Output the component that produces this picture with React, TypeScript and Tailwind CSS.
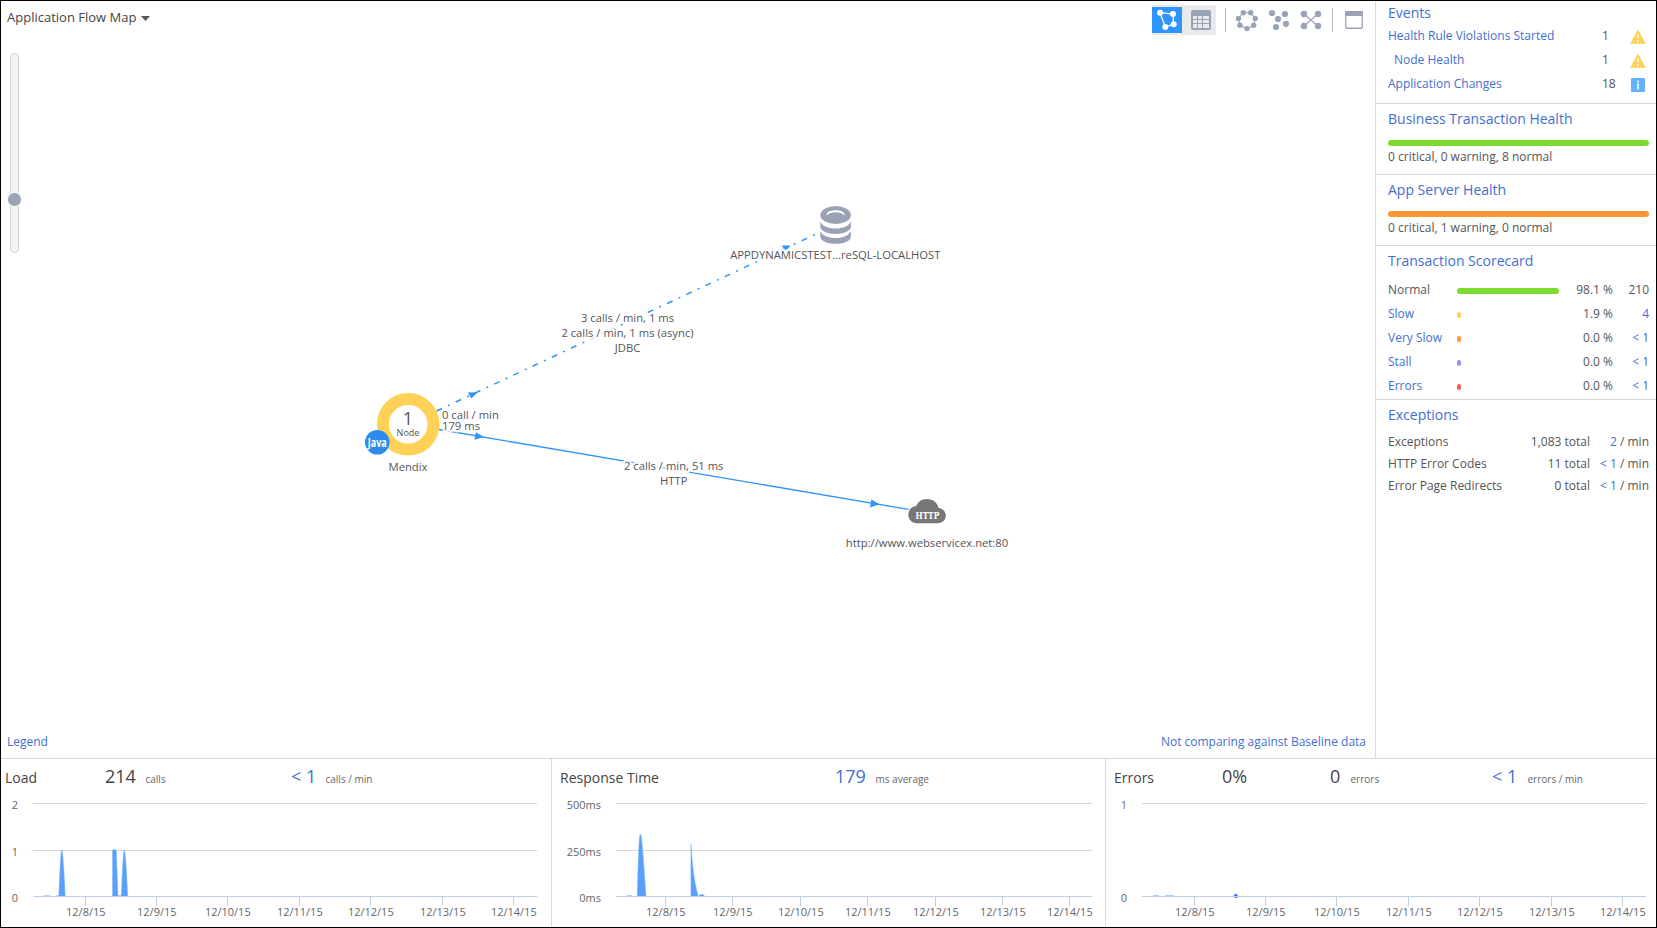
import React from 'react';

const OS = '"Open Sans", "Noto Sans", sans-serif';
const LINE = '#2f94fb';
const GREY = '#9aa3b5';

type Tick = { x: number; label: string };
const DAYS = ['12/8/15', '12/9/15', '12/10/15', '12/11/15', '12/12/15', '12/13/15', '12/14/15'];
const ticks = (xs: number[]): Tick[] => xs.map((x, i) => ({ x, label: DAYS[i] }));

function Dots({ pts, r }: { pts: number[][]; r: number }) {
  return (
    <>
      {pts.map(([x, y], i) => (
        <circle key={i} cx={x} cy={y} r={r} />
      ))}
    </>
  );
}

function Toolbar() {
  return (
    <div className="mt-1 flex h-[30px] items-center">
      <div className="flex h-[30px] items-center bg-[#e9eaec]">
        <button className="flex h-[26px] w-[30px] items-center justify-center bg-[#2f94fb]">
          <svg width="30" height="26" viewBox="0 0 30 26" fill="#fff" stroke="none">
            <path d="M8 5.7 21 7l.7 10.3-8.4 2.7z" fill="none" stroke="#fff" strokeWidth="1.3" />
            <Dots pts={[[8, 5.7], [21, 7], [21.7, 17.3], [13.3, 20]]} r={3} />
          </svg>
        </button>
        <button className="flex h-[30px] w-[34px] items-center justify-center">
          <svg width="34" height="30" viewBox="0 0 34 30" fill={GREY}>
            <path
              fillRule="evenodd"
              d="M11 5h16a2 2 0 0 1 2 2v16a2 2 0 0 1-2 2H11a2 2 0 0 1-2-2V7a2 2 0 0 1 2-2zM11 11v3h4v-3zM16 11v3h4v-3zM21 11v3h6v-3zM11 15v3h4v-3zM16 15v3h4v-3zM21 15v3h6v-3zM11 19v4h4v-4zM16 19v4h4v-4zM21 19v4h6v-4z"
            />
          </svg>
        </button>
      </div>
      <div className="ml-[9px] h-6 w-px bg-[#b5b8be]" />
      <svg className="ml-2.5" width="22" height="24" viewBox="1236 8 22 24" fill={GREY}>
        <path d="M1243.3 12.7h7.4l4.6 5.6-1.6 7-6.7 3.4-7-3.4-1.7-7z" fill="none" stroke={GREY} strokeWidth="1.1" />
        <Dots pts={[[1243.3, 12.7], [1250.7, 12.7], [1255.2, 18.4], [1253.7, 25.3], [1247, 28.6], [1240, 25.3], [1238.4, 18.4]]} r={2.7} />
      </svg>
      <svg className="ml-2.5" width="22" height="24" viewBox="1268 8 22 24" fill={GREY}>
        <Dots pts={[[1272, 13], [1285, 14], [1278, 19], [1286, 23.8], [1276, 27]]} r={3.1} />
      </svg>
      <svg className="ml-2.5" width="22" height="24" viewBox="1300 8 22 24" fill={GREY}>
        <path d="M1303.8 13.8 1318 26.2M1318 13.8 1303.8 26.2" stroke={GREY} strokeWidth="1.2" />
        <Dots pts={[[1303.9, 14], [1318, 14], [1303.9, 26], [1318, 26]]} r={3.2} />
      </svg>
      <div className="ml-[10px] h-6 w-px bg-[#b5b8be]" />
      <svg className="ml-3" width="18" height="18" viewBox="0 0 18 18">
        <rect x="0.75" y="0.75" width="16.5" height="16.5" rx="0.7" fill="#fff" stroke={GREY} strokeWidth="1.3" />
        <rect x="0" y="0" width="18" height="5" rx="1" fill={GREY} />
      </svg>
    </div>
  );
}

function Label({ x, y, anchor = 'middle', size = 11.25, halo = true, children }: { x: number; y: number; anchor?: 'start' | 'middle'; size?: number; halo?: boolean; children: React.ReactNode }) {
  return (
    <text
      x={x}
      y={y}
      fontFamily={OS}
      fontSize={size}
      textAnchor={anchor}
      fill="#555"
      stroke={halo ? 'rgba(255,255,255,0.85)' : 'none'}
      strokeWidth="5"
      strokeLinejoin="round"
      paintOrder="stroke"
    >
      {children}
    </text>
  );
}

function FlowMap() {
  return (
    <svg className="block h-[380px] w-[700px]" viewBox="360 190 700 380">
      <g stroke={LINE} strokeWidth="1.3" fill="none">
        <path d="M436.5 411 817.7 233.3" strokeWidth="1.5" strokeDasharray="6 6.6 2 6.6" />
        <path d="M439 429.5 908.5 509.4" />
      </g>
      <g fill={LINE}>
        <path d="M477.7 392.3 467.8 392.5 471.4 398.6z" />
        <path d="M790.7 245.4 781.8 245.4 785.3 251.5z" />
      </g>

      <circle cx="408.2" cy="424.3" r="25.3" fill="#fff" stroke="#ffd157" strokeWidth="12" />
      <Label x={408} y={424.5} size={18} halo={false}>1</Label>
      <Label x={408} y={436} size={9} halo={false}>Node</Label>
      <circle cx="377.3" cy="442.3" r="12.3" fill="#2d8ceb" />
      <text x="367.8" y="446.8" textLength="19" lengthAdjust="spacingAndGlyphs" fontFamily={OS} fontWeight="700" fontSize="12.5" fill="#fff">
        Java
      </text>
      <Label x={408} y={471}>Mendix</Label>
      <Label x={442} y={419} anchor="start">0 call / min</Label>
      <Label x={442} y={430} anchor="start">179 ms</Label>

      <Label x={627.5} y={322}>3 calls / min, 1 ms</Label>
      <Label x={627.5} y={337}>2 calls / min, 1 ms (async)</Label>
      <Label x={627.5} y={352}>JDBC</Label>
      <Label x={673.7} y={470}>2 calls / min, 51 ms</Label>
      <Label x={673.7} y={485}>HTTP</Label>
      <g fill={LINE}>
        <path d="M484 437 475.8 432.3 474.4 439.8z" />
        <path d="M879.5 504.2 871.3 499.4 870 507.4z" />
      </g>

      <g fill={GREY}>
        <ellipse cx="835.6" cy="215" rx="15.3" ry="9" />
        <path d="M820.3 221.6c1.8 4.4 8 7 15.3 7s13.5-2.6 15.3-7v5.2c0 4-6.8 7.2-15.3 7.2s-15.3-3.2-15.3-7.2z" />
        <path d="M820.3 231c1.8 4.4 8 7 15.3 7s13.5-2.6 15.3-7v5.4c0 4.1-6.8 7.4-15.3 7.4s-15.3-3.3-15.3-7.4z" />
      </g>
      <path d="M826.6 215.6c-.8-3.2 3.5-5.4 9-5.4s9.8 2.2 9 5.4c-1.3-2-4.700-3.300-9-3.300s-7.700 1.300-9 3.300z" fill="#fff" />
      <Label x={835.3} y={259}>APPDYNAMICSTEST...reSQL-LOCALHOST</Label>

      <path d="M917 523.2c-5 0-8.700-3.700-8.700-8.500 0-4.500 3.200-8.200 7.800-8.700 1.600-4.200 5.900-7 10.900-7 6 0 10.700 3.800 11.500 9.100 4.300.3 7.300 3.600 7.300 7.500 0 4.300-3.400 7.600-7.900 7.600z" fill="#777" />
      <text x="915.5" y="519" textLength="24" lengthAdjust="spacingAndGlyphs" fontFamily='"DejaVu Serif", serif' fontWeight="700" fontSize="9.3" fill="#fff">
        HTTP
      </text>
      <Label x={927} y={547}>http://www.webservicex.net:80</Label>
    </svg>
  );
}

function Warning() {
  return (
    <svg className="mt-[2px]" width="16" height="14" viewBox="0 0 16 14">
      <path d="M8 .8 15 13.2H1z" fill="#ffd157" stroke="#ffd157" strokeWidth="1.2" strokeLinejoin="round" />
      <path d="M8 4.5v4.3M8 10.2v1.6" stroke="#fff" strokeWidth="1.6" />
    </svg>
  );
}

function Info() {
  return (
    <svg className="mt-[2px]" width="16" height="14" viewBox="0 0 16 14">
      <rect x="1" width="14" height="14" rx="1" fill="#63b1ff" />
      <path d="M8 2.6v1.8M8 5.6v6" stroke="#fff" strokeWidth="1.6" />
    </svg>
  );
}

function Heading({ children }: { children: React.ReactNode }) {
  return <h2 className="text-sm leading-5 text-[#3f6fd1]">{children}</h2>;
}

function EventRow({ name, count, icon, indent = false }: { name: string; count: string; icon: React.ReactNode; indent?: boolean }) {
  return (
    <div className="grid h-6 grid-cols-[214px_28px_16px] items-center leading-6">
      <span className={indent ? 'pl-1.5 text-[#3f6fd1]' : 'text-[#3f6fd1]'}>{name}</span>
      <span>{count}</span>
      {icon}
    </div>
  );
}

function ScoreRow({ name, bar, pct, count, link = true }: { name: string; bar: string; pct: string; count: string; link?: boolean }) {
  return (
    <div className="grid h-6 grid-cols-[69px_102px_54px_36px] items-center leading-6">
      <span className={link ? 'text-[#3f6fd1]' : ''}>{name}</span>
      <span className={`mt-0.5 h-1.5 rounded-full ${bar}`} />
      <span className="text-right">{pct}</span>
      <span className={link ? 'text-right text-[#3f6fd1]' : 'text-right'}>{count}</span>
    </div>
  );
}

function ExceptionRow({ name, total, rate }: { name: string; total: string; rate: string }) {
  return (
    <div className="grid h-[22px] grid-cols-[122px_80px_59px] leading-[22px]">
      <span className="whitespace-nowrap">{name}</span>
      <span className="text-right">{total} total</span>
      <span className="text-right">
        <span className="text-[#3f6fd1]">{rate}</span> / min
      </span>
    </div>
  );
}

function Health({ title, bar, text }: { title: string; bar: string; text: string }) {
  return (
    <section className="h-[71px] border-b border-[#dadada] pt-[5px] pr-[7px] pl-3">
      <Heading>{title}</Heading>
      <div className={`mt-[11px] h-1.5 w-[261px] rounded-full ${bar}`} />
      <p className="mt-[3px] leading-4">{text}</p>
    </section>
  );
}

function Sidebar() {
  return (
    <aside className="flex w-[281px] shrink-0 flex-col border-l border-[#dadada] text-xs text-[#555]">
      <section className="h-[103px] border-b border-[#dadada] pt-0.5 pl-3">
        <Heading>Events</Heading>
        <div className="mt-px">
          <EventRow name="Health Rule Violations Started" count="1" icon={<Warning />} />
          <EventRow name="Node Health" count="1" icon={<Warning />} indent />
          <EventRow name="Application Changes" count="18" icon={<Info />} />
        </div>
      </section>
      <Health title="Business Transaction Health" bar="bg-[#7bdb30]" text="0 critical, 0 warning, 8 normal" />
      <Health title="App Server Health" bar="bg-[#ff9435]" text="0 critical, 1 warning, 0 normal" />
      <section className="h-[154px] border-b border-[#dadada] pt-[5px] pl-3">
        <Heading>Transaction Scorecard</Heading>
        <div className="mt-[7px]">
          <ScoreRow name="Normal" bar="w-[102px] bg-[#7bdb30]" pct="98.1 %" count="210" link={false} />
          <ScoreRow name="Slow" bar="w-1 bg-[#ffd157]" pct="1.9 %" count="4" />
          <ScoreRow name="Very Slow" bar="w-1 bg-[#ff9435]" pct="0.0 %" count="< 1" />
          <ScoreRow name="Stall" bar="w-1 bg-[#9b8fe8]" pct="0.0 %" count="< 1" />
          <ScoreRow name="Errors" bar="w-1 bg-[#f25f5f]" pct="0.0 %" count="< 1" />
        </div>
      </section>
      <section className="pt-[5px] pl-3">
        <Heading>Exceptions</Heading>
        <div className="mt-1.5">
          <ExceptionRow name="Exceptions" total="1,083" rate="2" />
          <ExceptionRow name="HTTP Error Codes" total="11" rate="< 1" />
          <ExceptionRow name="Error Page Redirects" total="0" rate="< 1" />
        </div>
      </section>
    </aside>
  );
}

type ChartProps = {
  view: string;
  box: string;
  x1: number;
  x2: number;
  yLabelX: number;
  yLabels: { y: number; text: string }[];
  ticks: Tick[];
  children: React.ReactNode;
};

function Chart({ view, box, x1, x2, yLabelX, yLabels, ticks, children }: ChartProps) {
  return (
    <svg className={`block ${box}`} viewBox={view} fontFamily={OS} fontSize="11" fill="#666">
      {yLabels.map((l) => (
        <g key={l.text}>
          <text x={yLabelX} y={l.y + 5.5} textAnchor="end">{l.text}</text>
          {l.y < 890 && <path d={`M${x1} ${l.y + 0.5}H${x2}`} stroke="#d6d6d6" />}
        </g>
      ))}
      {children}
      <path d={`M${x1} 896.5H${x2}`} stroke="#c0d0e0" />
      {ticks.map((t) => (
        <g key={t.label}>
          <path d={`M${t.x} 897V906`} stroke="#c0d0e0" />
          <text x={t.x + 0.3} y="916" textAnchor="middle">{t.label}</text>
        </g>
      ))}
    </svg>
  );
}

const Big = ({ children, link = false }: { children: React.ReactNode; link?: boolean }) => (
  <span className={link ? 'text-lg leading-6 whitespace-nowrap text-[#3f6fd1]' : 'text-lg leading-6 whitespace-nowrap'}>{children}</span>
);
const Unit = ({ children }: { children: React.ReactNode }) => <span className="pl-[0.5px] text-[10px] whitespace-nowrap text-[#666]">{children}</span>;

export default function App() {
  return (
    <div className="flex h-[928px] w-[1657px] flex-col overflow-hidden border border-black bg-white font-['Open_Sans','Noto_Sans',sans-serif] text-[#444]">
      <div className="flex h-[757px] shrink-0">
        <main className="flex w-[1374px] flex-col">
          <div className="flex h-[52px] shrink-0 items-start justify-between pr-3 pl-1.5">
            <button className="mt-1.5 flex items-center text-[13px] leading-5">
              Application Flow Map
              <svg className="mt-0.5 ml-[5px]" width="9" height="5" viewBox="0 0 9 5">
                <path d="M0 0h9L4.5 5z" fill="#555" />
              </svg>
            </button>
            <Toolbar />
          </div>
          <div className="flex flex-1">
            <div className="flex w-[359px] pl-[9px]">
              <div className="relative h-[200px] w-[9px] rounded-full border border-[#d4d4d4] bg-[#f3f3f3]">
                <div className="absolute top-[138px] -left-[4px] size-[15px] rounded-full border-[1.5px] border-white bg-[#9aa3b5]" />
              </div>
            </div>
            <div className="pt-[137px]">
              <FlowMap />
            </div>
          </div>
          <div className="flex h-[26px] justify-between pr-[9px] pl-1.5 text-xs leading-5 text-[#3f6fd1]">
            <a>Legend</a>
            <a>Not comparing against Baseline data</a>
          </div>
        </main>
        <Sidebar />
      </div>

      <div className="flex flex-1 border-t border-[#dadada]">
        <section className="w-[550px] shrink-0">
          <div className="grid h-9 grid-cols-[100px_40px_146px_34px_1fr] items-baseline pt-[5px] pl-1">
            <span className="text-sm">Load</span>
            <Big>214</Big>
            <Unit>calls</Unit>
            <Big link>&lt; 1</Big>
            <Unit>calls / min</Unit>
          </div>
          <Chart
            view="1 795 550 130"
            box="h-[130px] w-[550px]"
            x1={33}
            x2={537}
            yLabelX={18}
            yLabels={[{ y: 803, text: '2' }, { y: 850, text: '1' }, { y: 896, text: '0' }]}
            ticks={ticks([85.5, 156.5, 227.5, 299.5, 370.5, 442.5, 513.5])}
          >
            <path d="M44 895.5h6M56 895.5h3M118 895.5h3" stroke="#a9d2f5" />
            <path d="M58.8 896.5Q60.5 850 61.8 850T65.2 896.5zM112.5 896.5V850Q114.5 849 116.3 850L118 896.5zM121.3 896.5Q123 850 124.3 850T127.7 896.5z" fill="#5a9ffb" stroke="#7fb8f5" strokeWidth="0.5" />
          </Chart>
        </section>
        <section className="w-[554px] shrink-0 border-l border-[#dadada]">
          <div className="grid h-9 grid-cols-[275px_40px_1fr] items-baseline pt-[5px] pl-2">
            <span className="text-sm">Response Time</span>
            <Big link>179</Big>
            <Unit>ms average</Unit>
          </div>
          <Chart
            view="552 795 553 130"
            box="h-[130px] w-[553px]"
            x1={616}
            x2={1092}
            yLabelX={601}
            yLabels={[{ y: 803, text: '500ms' }, { y: 850, text: '250ms' }, { y: 896, text: '0ms' }]}
            ticks={ticks([665.5, 732.5, 800.5, 867.5, 935.5, 1002.5, 1069.5])}
          >
            <path d="M626.5 895.5h5.5" stroke="#a9d2f5" />
            <path d="M637.3 896.5C638.2 860 639 834 640.4 834S643.5 858 646 896.5zM690.9 896.5V844C692.5 866 694 881 698.3 896.5zM698.3 896.5Q702 892 705 896.5z" fill="#5a9ffb" stroke="#7fb8f5" strokeWidth="0.5" />
          </Chart>
        </section>
        <section className="flex-1 border-l border-[#dadada]">
          <div className="grid h-9 grid-cols-[108px_108px_20px_142px_35px_1fr] items-baseline pt-[5px] pl-2">
            <span className="text-sm">Errors</span>
            <Big>0%</Big>
            <Big>0</Big>
            <Unit>errors</Unit>
            <Big link>&lt; 1</Big>
            <Unit>errors / min</Unit>
          </div>
          <Chart
            view="1106 795 550 130"
            box="h-[130px] w-[550px]"
            x1={1142}
            x2={1646}
            yLabelX={1127}
            yLabels={[{ y: 803, text: '1' }, { y: 896, text: '0' }]}
            ticks={ticks([1194.5, 1265.5, 1336.5, 1408.5, 1479.5, 1551.5, 1622.5])}
          >
            <path d="M1153 895.5h6M1165 895.5h9" stroke="#a9d2f5" />
            <circle cx="1235.8" cy="896" r="2.1" fill="#2680ff" />
          </Chart>
        </section>
      </div>
    </div>
  );
}
